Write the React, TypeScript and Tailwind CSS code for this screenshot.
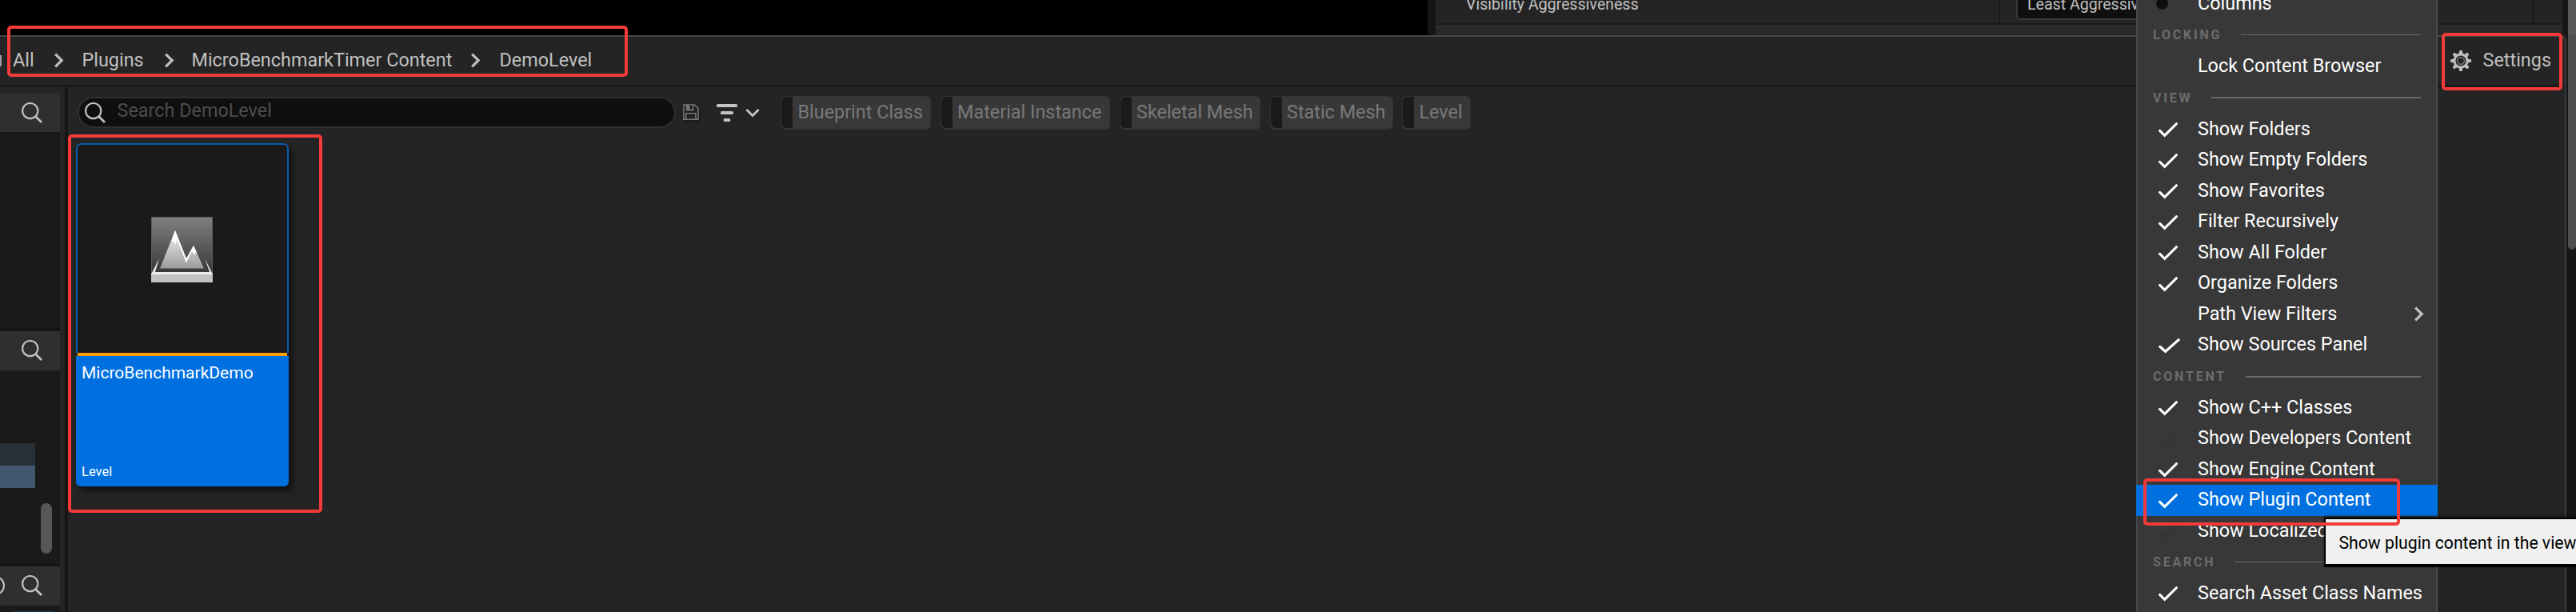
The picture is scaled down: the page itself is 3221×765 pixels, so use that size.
const CHECK = "M2.4 10.8 L8 16.4 L21.6 2.6";

function SearchIcon({ className = "" }: { className?: string }) {
  return (
    <svg width="28" height="28" viewBox="0 0 28 28" fill="none" stroke="#c0c0c0" strokeWidth="2.2" className={`shrink-0 ${className}`}>
      <circle cx="10.7" cy="10.6" r="9.6" />
      <path d="M17.2 17.2 L25 25" strokeWidth="2.8" />
    </svg>
  );
}

function Chevron({ className = "" }: { className?: string }) {
  return (
    <svg width="12" height="19" viewBox="0 0 12 19" fill="none" stroke="#c0c0c0" strokeWidth="3.2" className={`shrink-0 ${className}`}>
      <path d="M1.2 1.6 L9.2 9.5 L1.2 17.4" />
    </svg>
  );
}

function SaveIcon() {
  return (
    <svg width="21" height="21" viewBox="0 0 21 21" fill="none" stroke="#7a7a7a" strokeWidth="1.6" className="shrink-0 drop-shadow-[1px_1px_1px_#111]">
      <path d="M1 1 H14.5 L19 5.5 V19.2 H1 Z" />
      <path d="M4.6 1 V7.6 H12.6 V1" />
      <path d="M4 2 H8.5 V7.6 H4 Z" fill="#7a7a7a" stroke="none" />
      <path d="M3.8 19 V11.8 H16 V19" />
    </svg>
  );
}

function FilterIcon() {
  return (
    <svg width="26" height="22" viewBox="0 0 26 22" fill="#c4c4c4" className="shrink-0">
      <rect x="0" y="0" width="26" height="4" rx="1.6" />
      <rect x="5" y="9" width="16" height="4" rx="1.6" />
      <rect x="8.7" y="18" width="8.6" height="4" rx="1.6" />
    </svg>
  );
}

function GearIcon() {
  return (
    <svg width="28" height="28" viewBox="-14 -14 28 28" className="shrink-0">
      <g fill="#c0c0c0">
        {[0, 45, 90, 135, 180, 225, 270, 315].map((a) => (
          <path key={a} d="M-2.8 -8 L-1.5 -13.1 H1.5 L2.8 -8 Z" transform={`rotate(${a})`} />
        ))}
      </g>
      <circle r="8" fill="#242424" stroke="#c0c0c0" strokeWidth="2.8" />
      <circle r="4.4" fill="none" stroke="#6e6e6e" strokeWidth="1.8" />
    </svg>
  );
}

function LevelIcon() {
  return (
    <svg width="78" height="82" viewBox="0 0 78 82">
      <defs>
        <linearGradient id="sky" x1="0" y1="0" x2="0" y2="1">
          <stop offset="0" stopColor="#808080" />
          <stop offset="1" stopColor="#363636" />
        </linearGradient>
        <linearGradient id="rock" x1="0" y1="0" x2="0" y2="1">
          <stop offset="0" stopColor="#f4f4f4" />
          <stop offset="1" stopColor="#9c9c9c" />
        </linearGradient>
      </defs>
      <rect x="0.5" y="0.5" width="76" height="72" fill="url(#sky)" stroke="#5a5a5a" />
      <path d="M10 52 L0.5 71 H76.5 L67 52 L73 69 H5 Z" fill="#e8e8e8" />
      <path d="M11 64.5 L30 17 L44 53 L53 36 L66 64.5 Z" fill="url(#rock)" />
      <path d="M30 17 L44 52 L53 36 L57.5 46 L55 44.5 L54 48 L51 43 L43.8 57.5 L33.5 31 L31.8 29 L30 35 L28 29.5 L26 31 L26.5 26 Z" fill="#fff" />
      <rect x="0" y="71" width="77" height="11" fill="#c2c2c2" />
      <rect x="0" y="70.5" width="77" height="1.5" fill="#efefef" />
    </svg>
  );
}

function Crumb({ children, className }: { children: string; className: string }) {
  return <span className={`shrink-0 ${className}`}>{children}</span>;
}

function Chip({ label, className }: { label: string; className: string }) {
  return (
    <div className={`flex h-[42px] shrink-0 overflow-hidden rounded-[6px] border border-[#323232] bg-[#383838] ${className}`}>
      <div className="mb-px w-[14px] rounded-l-[6px] bg-[#1a1a1a]" />
      <span className="pl-[6.5px] leading-[38px] text-[#787878]">{label}</span>
    </div>
  );
}

function Section({ label, className = "h-[40px]", line = "h-[2px]" }: { label: string; className?: string; line?: string }) {
  return (
    <div className={`flex shrink-0 items-center pr-[19px] pl-[19px] ${className}`}>
      <span className="pt-[1px] text-[16px] font-bold tracking-[2.8px] text-[#6c6c6c]">{label}</span>
      <div className={`ml-[23.5px] flex-1 bg-[#6a6a6a] ${line}`} />
    </div>
  );
}

type ItemProps = { label: string; state?: "on" | "off" | "none"; sub?: boolean; active?: boolean; big?: boolean };

function Item({ label, state = "on", sub, active, big }: ItemProps) {
  return (
    <div className={`flex h-[38.5px] shrink-0 items-center ${active ? "-mx-[2px] bg-[#0070e0] px-[2px]" : ""}`}>
      <div className="flex w-[75px] pl-[24.5px] pt-[1px]">
        {state !== "none" && (
          <svg width={big ? 29 : 26} height="20" viewBox="0 0 24 19" preserveAspectRatio="none" fill="none" stroke={state === "on" ? "#fff" : "#353535"} strokeWidth="2.9" strokeLinecap="round">
            <path d={CHECK} />
          </svg>
        )}
      </div>
      <span className="pb-[1px] text-[23.4px] whitespace-nowrap text-white">{label}</span>
      {sub && <Chevron className="mr-[15px] ml-auto" />}
    </div>
  );
}

function SideHeader({ className = "", clock }: { className?: string; clock?: boolean }) {
  return (
    <div className={`flex h-[49px] w-[75px] shrink-0 items-start bg-[#2f2f2f] pt-[12px] ${className}`}>
      <div className="w-[27px]">
        {clock && (
          <svg width="8" height="26" viewBox="0 0 8 26" fill="none" stroke="#c0c0c0" strokeWidth="2.2">
            <circle cx="-6" cy="13" r="11" />
          </svg>
        )}
      </div>
      <SearchIcon />
    </div>
  );
}

function DetailsStrip() {
  return (
    <div className="flex h-[44px]">
      <div className="w-[1785px] bg-black" />
      <div className="w-[10px] bg-[#151515]" />
      <div className="flex w-[1409px] flex-col">
        <div className="flex h-[29px] bg-[#242424] text-[19.6px] leading-[24px] text-[#c0c0c0]">
          <div className="w-[704px] pl-[38px]">
            <div className="-mt-[6px]">Visibility Aggressiveness</div>
          </div>
          <div className="w-[2px] bg-[#1a1a1a]" />
          <div className="w-[665px] pl-[20px]">
            <div className="-mt-[6px] h-[31px] w-[400px] rounded-b-[6px] border-2 border-t-0 border-[#383838] bg-[#0f0f0f] pl-[12px]">Least Aggressive</div>
          </div>
          <div className="w-[2px] bg-[#1a1a1a]" />
        </div>
        <div className="h-[2px] bg-[#1a1a1a]" />
        <div className="h-[13px] bg-linear-to-b from-[#2c2c2c] to-[#262626]" />
      </div>
      <div className="w-[7px] bg-[#161616]" />
      <div className="w-[10px] bg-[#575757]" />
    </div>
  );
}

function Sidebar() {
  return (
    <div className="flex w-[81px] shrink-0 flex-col pt-[7px]">
      <SideHeader />
      <div className="h-[245px] w-[75px] bg-[#1a1a1a]" />
      <div className="h-[4px] w-[75px] bg-[#151515]" />
      <SideHeader className="!pt-[11px]" />
      <div className="flex h-[241px] w-[75px] bg-[#1a1a1a]">
        <div className="w-[44px] pt-[91px]">
          <div className="h-[28px] bg-[#2a3038]" />
          <div className="h-[28px] bg-[#42566e]" />
        </div>
        <div className="mt-[166px] ml-[7px] h-[63px] w-[14px] rounded-full bg-[#575757]" />
      </div>
      <div className="h-[4px] w-[75px] bg-[#151515]" />
      <SideHeader className="!pt-[11px]" clock />
      <div className="h-[8px] w-[75px] bg-[#1a1a1a] pt-[7px] pl-[17px]">
        <div className="h-px w-[50px] bg-[#123a5e]" />
      </div>
    </div>
  );
}

function AssetTile() {
  return (
    <div className="flex h-[429px] w-[266px] flex-col overflow-hidden rounded-[6px] shadow-[5px_6px_7px_0px_rgba(0,0,0,0.5)]">
      <div className="flex h-[262px] justify-center rounded-t-[6px] border-2 border-b-0 border-[#0b5bb0] bg-[#1a1a1a] pt-[90px]">
        <LevelIcon />
      </div>
      <div className="mx-[2px] h-[4px] bg-[#ff9c00]" />
      <div className="-mt-[4px] flex flex-1 flex-col justify-between border-t-4 border-transparent bg-[#0070e0] bg-clip-padding px-[7px] pt-[8px] pb-[8px] text-white">
        <span className="text-[21px] leading-[26px]">MicroBenchmarkDemo</span>
        <span className="text-[16.5px] leading-[20px]">Level</span>
      </div>
    </div>
  );
}

function Browser() {
  return (
    <div className="flex flex-1">
      <div className="flex w-[3209px] flex-col rounded-tr-[8px] border-t-2 border-r-2 border-t-[#474747] border-r-[#3a3a3a] bg-[#242424]">
        <div className="flex h-[60px] items-center text-[23.4px] text-[#c0c0c0]">
          <div className="flex w-[16px] justify-start overflow-hidden">
            <div className="h-[14px] w-[2px] bg-[#a0a0a0]" />
          </div>
          <Crumb className="w-[52px]">All</Crumb>
          <Chevron className="mb-[2px]" />
          <Crumb className="w-[126px] pl-[22.5px]">Plugins</Crumb>
          <Chevron className="mb-[2px]" />
          <Crumb className="w-[371px] pl-[21.5px]">MicroBenchmarkTimer Content</Crumb>
          <Chevron className="mb-[2px]" />
          <Crumb className="pl-[23.5px]">DemoLevel</Crumb>
          <div className="ml-auto flex items-center pr-[17px]">
            <GearIcon />
            <span className="pl-[14px]">Settings</span>
          </div>
        </div>
        <div className="h-[3px] bg-[#1a1a1a]" />
        <div className="flex flex-1">
          <Sidebar />
          <div className="w-[4px] bg-[#151515]" />
          <div className="flex flex-col">
            <div className="flex h-[70px] items-start pt-[11px] pl-[12px] text-[23.4px]">
              <div className="mt-[1px] flex h-[39px] w-[748px] rounded-full border-2 border-[#2f2f2f] bg-[#0f0f0f]">
                <SearchIcon className="mt-[5px] ml-[6.5px]" />
                <span className="pl-[13px] leading-[30px] text-[#4c4c4c]">Search DemoLevel</span>
              </div>
              <div className="mt-[10px] ml-[9px]">
                <SaveIcon />
              </div>
              <div className="mt-[10px] ml-[21px]">
                <FilterIcon />
              </div>
              <svg width="18" height="11" viewBox="0 0 18 11" fill="none" stroke="#c4c4c4" strokeWidth="2.8" className="mt-[16px] ml-[10px]">
                <path d="M1.4 1 L9 8.6 L16.6 1" />
              </svg>
              <div className="ml-[26px] flex gap-[11.5px]">
                <Chip className="w-[188px]" label="Blueprint Class" />
                <Chip className="w-[212.5px]" label="Material Instance" />
                <Chip className="w-[176.5px]" label="Skeletal Mesh" />
                <Chip className="w-[154px]" label="Static Mesh" />
                <Chip className="w-[85.5px]" label="Level" />
              </div>
            </div>
            <div className="pl-[10px]">
              <AssetTile />
            </div>
          </div>
        </div>
      </div>
      <div className="w-[2px] bg-[#161616]" />
      <div className="flex-1 bg-[#161616]">
        <div className="h-[268px] rounded-b-[6px] bg-[#4f4f4f]" />
      </div>
    </div>
  );
}

function ViewMenu() {
  return (
    <div className="absolute top-[-15px] left-[2671px] flex h-[790px] w-[377px] flex-col border-x-2 border-[#4a4a4a] bg-[#383838]">
      <div className="flex h-[38.5px] shrink-0 items-center">
        <div className="w-[75px] pl-[23px]">
          <div className="h-[15px] w-[15px] rounded-full bg-[#0f0f0f]" />
        </div>
        <span className="pt-[1px] text-[23.4px] text-white">Columns</span>
      </div>
      <Section label="LOCKING" line="h-px" />
      <Item label="Lock Content Browser" state="none" />
      <Section label="VIEW" className="h-[40.5px]" />
      <Item label="Show Folders" />
      <Item label="Show Empty Folders" />
      <Item label="Show Favorites" />
      <Item label="Filter Recursively" />
      <Item label="Show All Folder" />
      <Item label="Organize Folders" />
      <Item label="Path View Filters" state="none" sub />
      <Item label="Show Sources Panel" big />
      <Section label="CONTENT" />
      <Item label="Show C++ Classes" />
      <Item label="Show Developers Content" state="off" />
      <Item label="Show Engine Content" />
      <Item label="Show Plugin Content" active />
      <Item label="Show Localized Content" state="off" />
      <Section label="SEARCH" className="h-[39.5px]" line="h-px" />
      <Item label="Search Asset Class Names" />
    </div>
  );
}

export default function App() {
  return (
    <div className="relative flex h-[765px] w-[3221px] flex-col overflow-hidden bg-[#242424] font-['Roboto',sans-serif] whitespace-nowrap">
      <DetailsStrip />
      <Browser />
      <ViewMenu />
      <div className="absolute top-[647px] left-[2906px] h-[62px] w-[330px] border-2 border-b-4 border-black bg-[#f0f0f0] pl-[16.5px] text-[21.2px] leading-[60px] text-black shadow-[0_-2px_3px_rgba(0,0,0,0.5)]">
        Show plugin content in the view
      </div>
      <div className="absolute top-[32px] left-[9px] h-[64px] w-[776px] rounded-[5px] border-4 border-[#f43a3a]" />
      <div className="absolute top-[168px] left-[85px] h-[473px] w-[318px] rounded-[5px] border-4 border-[#f43a3a]" />
      <div className="absolute top-[41px] left-[3053px] h-[72px] w-[151px] rounded-[5px] border-4 border-[#f43a3a]" />
      <div className="absolute top-[598px] left-[2680px] h-[59px] w-[321px] rounded-[5px] border-4 border-[#f43a3a]" />
    </div>
  );
}
